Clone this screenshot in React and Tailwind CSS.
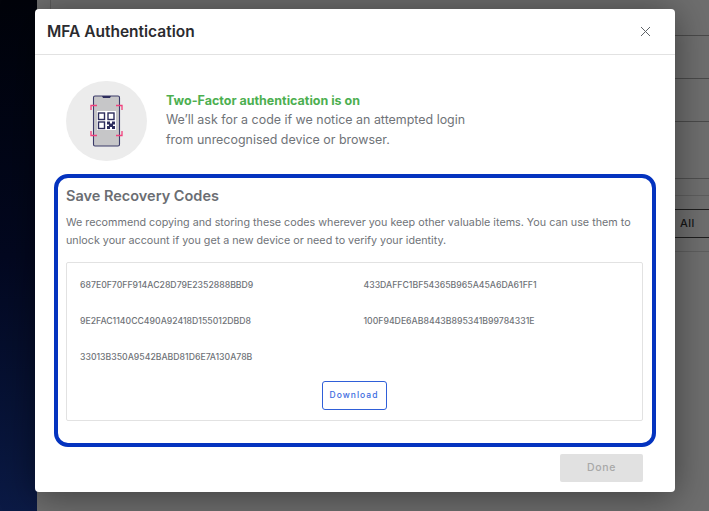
function PhoneIcon() {
  return (
    <svg width="33" height="52" viewBox="0 0 33 52" fill="none">
      <rect x="3.5" y="1" width="26" height="50" rx="1.5" fill="#c6c6c8" stroke="#3a3a68" strokeWidth="1.1" />
      <path d="M12 1h9l-1 2h-7z" fill="#2c2c5c" />
      <g stroke="#f0407c" strokeWidth="1.3" fill="none">
        <path d="M1 15v-4.500h6" />
        <path d="M26 10.500h6v4.500" />
        <path d="M1 36v4.500h6" />
        <path d="M26 40.500h6v-4.500" />
      </g>
      <rect x="7" y="16" width="19" height="19" fill="#fff" />
      <g stroke="#2c2c5c" strokeWidth="1.400" fill="none">
        <rect x="8.500" y="18" width="6" height="6.500" />
        <rect x="18" y="18" width="6" height="6.500" />
        <rect x="8.500" y="27" width="6" height="6.500" />
      </g>
      <path d="M17 26.500h3v2h2v-2h3v3h-2v1.500h2v3h-3v-2h-2v2h-3v-3h2v-1.500h-2z" fill="#2c2c5c" />
    </svg>
  );
}

const codes = [
  "687E0F70FF914AC28D79E2352888BBD9",
  "433DAFFC1BF54365B965A45A6DA61FF1",
  "9E2FAC1140CC490A92418D155012DBD8",
  "100F94DE6AB8443B895341B99784331E",
  "33013B350A9542BABD81D6E7A130A78B",
];

export default function App() {
  return (
    <div className="relative flex h-[511px] w-[709px] overflow-hidden font-['Inter','Liberation_Sans',sans-serif]">
      <div className="h-full w-[37px] bg-gradient-to-b from-[#01030a] via-[#030820] to-[#0b1a45]" />
      <div className="flex flex-1 justify-between bg-[#6e6e6e]">
        <div className="ml-[13px] h-[9px] w-px bg-[#5c5c5c]" />
        <div className="flex w-[34px] flex-col pt-[35px]">
          <div className="h-[43px] border-t border-[#4a4a4a]" />
          <div className="h-[43px] border-t border-[#4a4a4a]" />
          <div className="h-[57px] border-t border-[#4a4a4a]" />
          <div className="h-[17px] border-t border-[#4f4f4f]" />
          <div className="h-[14px] border-t border-[#5e5e5e]" />
          <div className="flex h-[29px] items-center border-y border-[#1e1e1e] pl-[5px] text-[11px] font-medium tracking-[0.04em] text-[#151515]">All</div>
          <div className="mt-[13px] border-t border-[#5e5e5e]" />
        </div>
      </div>

      <div className="absolute left-[35px] top-[9px] flex h-[483px] w-[640px] flex-col rounded-[4px] bg-white shadow-[0_4px_36px_rgba(0,0,0,0.45)]">
        <div className="flex h-[46px] items-center justify-between border-b border-[#e2e2e2] pl-[12px] pr-[24px]">
          <h1 className="text-[15.5px] font-semibold leading-none text-[#2b2b2f]">MFA Authentication</h1>
          <svg width="11" height="11" viewBox="0 0 11 11" stroke="#5f6368" strokeWidth="1">
            <path d="M1 1l9 9M10 1l-9 9" />
          </svg>
        </div>

        <div className="flex items-center pl-[31px] pt-[26px]">
          <div className="flex h-[80px] w-[81px] items-center justify-center rounded-full bg-[#ececec]">
            <PhoneIcon />
          </div>
          <div className="ml-[19px] -translate-y-[0.5px]">
            <p className="text-[12.5px] font-bold leading-[18px] text-[#4caf50]">Two-Factor authentication is on</p>
            <p className="text-[12.45px] leading-[20px] text-[#6f7378]">
              We’ll ask for a code if we notice an attempted login
              <br />
              from unrecognised device or browser.
            </p>
          </div>
        </div>

        <section className="mx-[19px] mt-[13px] h-[273px] rounded-[14px] border-[4px] border-[#0433bf] pl-[8px] pr-[9px] pt-[8px]">
          <h2 className="text-[14.5px] font-semibold leading-[20px] text-[#6b6e73]">Save Recovery Codes</h2>
          <p className="mt-[8px] text-[10.75px] leading-[18px] text-[#6f7378]">
            We recommend copying and storing these codes wherever you keep other valuable items. You can use them to
            <br />
            unlock your account if you get a new device or need to verify your identity.
          </p>
          <div className="mt-[12px] h-[159px] rounded-[2px] border border-[#e2e2e2] px-[13px] pt-[16px]">
            <div className="grid grid-cols-2 gap-x-[18px] gap-y-[23px]">
              {codes.map((c) => (
                <div key={c} className="text-[8.7px] font-medium leading-[13px] text-[#6f7378]">{c}</div>
              ))}
            </div>
            <div className="mt-[17px] flex justify-center pr-[1px]">
              <button className="h-[29px] w-[65px] rounded-[3px] border border-[#2f5fd8] text-[8.5px] font-medium tracking-[0.12em] text-[#3b6be0]">Download</button>
            </div>
          </div>
        </section>

        <div className="mr-[32px] mt-[7px] flex justify-end">
          <button className="h-[28px] w-[83px] rounded-[2px] bg-[#e1e1e1] text-[10.5px] font-medium tracking-[0.06em] text-[#a8a8a8]">Done</button>
        </div>
      </div>
    </div>
  );
}
